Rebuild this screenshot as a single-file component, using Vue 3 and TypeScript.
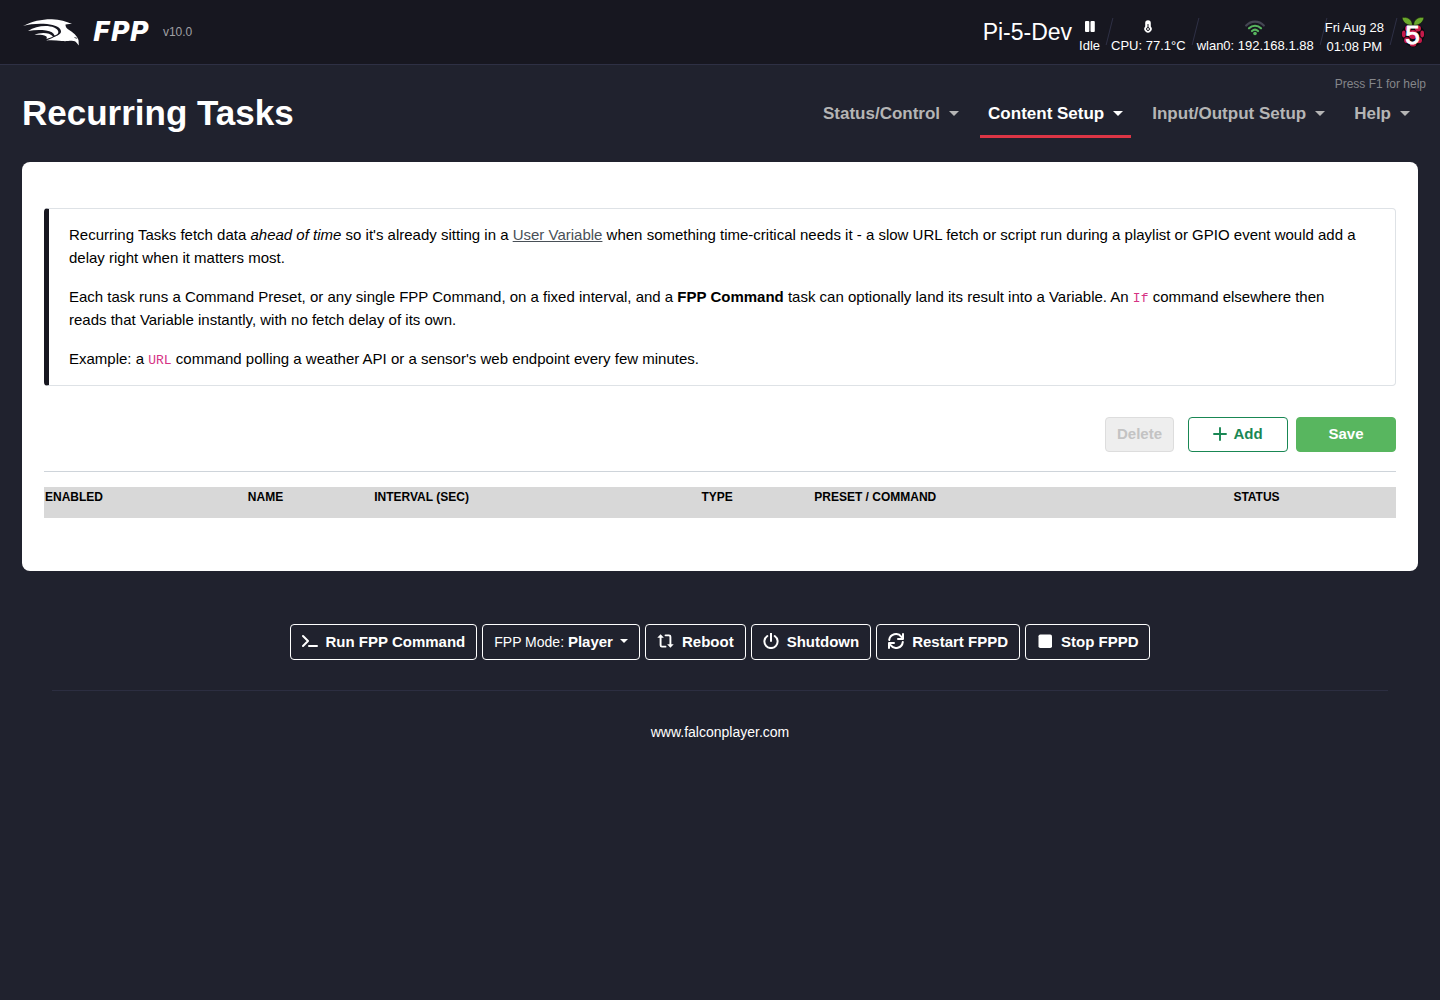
<script setup lang="ts">
interface MenuItem {
  label: string
  active?: boolean
}

interface Column {
  label: string
  width: string
}

const menu: MenuItem[] = [
  { label: 'Status/Control' },
  { label: 'Content Setup', active: true },
  { label: 'Input/Output Setup' },
  { label: 'Help' },
]

const columns: Column[] = [
  { label: 'Enabled', width: '15%' },
  { label: 'Name', width: '9.35%' },
  { label: 'Interval (sec)', width: '24.2%' },
  { label: 'Type', width: '8.35%' },
  { label: 'Preset / Command', width: '31%' },
  { label: 'Status', width: '12.1%' },
]
</script>

<template>
  <div class="page">
    <header class="topbar">
      <a class="brand" href="#">
        <svg class="falcon" viewBox="0 0 56 27" width="56" height="27" aria-hidden="true">
          <g fill="#fff">
            <path d="M0 7C9 2 20 0 29 .2c8 .2 14 2.300 20 4.900-2.500-.3-5-.2-6.500.4 0 2 .8 3.500 2.500 4.800C50.500 13.500 54 17 55.500 21l.3 5.500-2-2.500c-1-1.500-2.500-2.200-5-2.200-4 .2-6 .5-10 .2-5.500-.6-10-1-15.800-.5 3-1.200 5-1.800 7.500-3.200 4-1.800 7.500-3 7.500-5.800C38 8.500 32 5.800 24 5 15 4.300 7 5 0 7Z"/>
            <path d="M5 12C13 6.500 25 5.800 31 8.500c4 1.700 5.500 4.500 3.500 6.500-1 .9-2 1.200-3 1.500-.7-2.500-3.500-4.300-8.500-5-6-.8-12-.5-18 .5Z"/>
            <path d="M11.500 15.800c6-2.800 15-2.800 18.500 1.700-2 .9-3.500 1.600-6.500 2.500.5-1.500.5-2-.5-2.800-2.500-1.400-6.500-1.700-11.500-1.400Z"/>
          </g>
          <path stroke="#171720" stroke-width=".8" fill="none" d="M51.500 18.500l2.500.8"/>
        </svg>
        <span class="wordmark">FPP</span>
        <span class="version">v10.0</span>
      </a>
      <div class="status">
        <div class="host">Pi-5-Dev</div>
        <div class="stat">
          <svg viewBox="0 0 10 18" width="10" height="18" aria-hidden="true">
            <rect x="0" y="3" width="4.300" height="11" rx="1" fill="#fff"/>
            <rect x="5.500" y="3" width="4.300" height="11" rx="1" fill="#fff"/>
          </svg>
          <span>Idle</span>
        </div>
        <div class="stat">
          <svg viewBox="0 0 8 18" width="8" height="18" aria-hidden="true">
            <path fill="#fff" d="M1.200 5a2.800 2.800 0 0 1 5.600 0v3.500a3.700 3.700 0 1 1-5.600 0Z"/>
            <path fill="none" stroke="#171720" stroke-width="1" d="M4 6v3.500"/>
            <circle cx="4" cy="11" r="1.500" fill="none" stroke="#171720"/>
          </svg>
          <span>CPU: 77.1°C</span>
        </div>
        <div class="stat">
          <svg viewBox="0 0 20 18" width="20" height="18" aria-hidden="true" fill="none" stroke-width="2.200" stroke-linecap="round">
            <path stroke="#454653" d="M1.200 7.500C6 2.300 14 2.300 18.800 7.500"/>
            <path stroke="#58b65f" d="M4 10.300c3.500-3.400 8.500-3.400 12 0M7 13c2-1.700 4-1.700 6 0"/>
            <circle cx="10" cy="15.500" r="1.800" fill="#58b65f"/>
          </svg>
          <span>wlan0: 192.168.1.88</span>
        </div>
        <div class="stat">
          <span>Fri Aug 28</span>
          <span>01:08 PM</span>
        </div>
        <svg class="pi" viewBox="0 0 24 32" width="36" height="32" role="img" aria-label="Raspberry Pi 5">
          <path fill="#08080c" d="M12 7C6 8 1 12 .3 17c-.6 6 5 13 11.700 14.500C18.700 30 24.300 23 23.700 17 23 12 18 8 12 7Z"/>
          <path fill="#6aa82c" stroke="#10150b" stroke-width=".6" d="M11.500 9.200C6.500 9.700 2 7 1 1.600 6 .6 11 2.800 11.500 9.200ZM12.500 9.200c5 .5 9.500-2.200 10.500-7.600C18 .6 13 2.800 12.500 9.200Z"/>
          <g fill="#c51a4a">
            <circle cx="7" cy="12.500" r="3"/><circle cx="17" cy="12.500" r="3"/>
            <circle cx="12" cy="18.500" r="4.600"/><ellipse cx="2.800" cy="18" rx="1.900" ry="3.400"/>
            <ellipse cx="21.200" cy="18" rx="1.900" ry="3.400"/><circle cx="6" cy="24.300" r="3"/>
            <circle cx="18" cy="24.300" r="3"/><ellipse cx="12" cy="28.500" rx="3.200" ry="2"/>
          </g>
          <text x="11.500" y="28" text-anchor="middle" class="pi-number">5</text>
        </svg>
      </div>
    </header>

    <div class="help-hint">Press F1 for help</div>
    <div class="heading">
      <h1>Recurring Tasks</h1>
      <nav>
        <a v-for="item in menu" :key="item.label" href="#" :class="{ active: item.active }">
          {{ item.label }}<i class="caret"></i>
        </a>
      </nav>
    </div>

    <main>
      <section class="callout">
        <p>
          Recurring Tasks fetch data <em>ahead of time</em> so it's already sitting in a
          <a href="#">User Variable</a> when something time-critical needs it - a slow URL fetch or
          script run during a playlist or GPIO event would add a delay right when it matters most.
        </p>
        <p>
          Each task runs a Command Preset, or any single FPP Command, on a fixed interval, and a
          <b>FPP Command</b> task can optionally land its result into a Variable. An
          <code>If</code> command elsewhere then reads that Variable instantly, with no fetch delay
          of its own.
        </p>
        <p>
          Example: a <code>URL</code> command polling a weather API or a sensor's web endpoint every
          few minutes.
        </p>
      </section>

      <div class="actions">
        <button type="button" class="delete" disabled>Delete</button>
        <button type="button" class="add">
          <svg viewBox="0 0 14 14" width="14" height="14" aria-hidden="true">
            <path d="M7 1v12M1 7h12" fill="none" stroke="currentColor" stroke-width="1.900" stroke-linecap="round"/>
          </svg>
          Add
        </button>
        <button type="button" class="save">Save</button>
      </div>

      <hr />

      <table>
        <colgroup>
          <col v-for="c in columns" :key="c.label" :style="{ width: c.width }" />
        </colgroup>
        <thead>
          <tr>
            <th v-for="c in columns" :key="c.label" scope="col">{{ c.label }}</th>
          </tr>
        </thead>
        <tbody></tbody>
      </table>
    </main>

    <div class="controls">
      <button type="button">
        <svg viewBox="0 0 16 16" width="16" height="16" aria-hidden="true">
          <path d="M1 3l5 5-5 5M7 13h8" class="line"/>
        </svg>
        Run FPP Command
      </button>
      <button type="button" class="mode">
        <span>FPP Mode: <b>Player</b></span><i class="caret small"></i>
      </button>
      <button type="button">
        <svg viewBox="0 0 18 16" width="17" height="16" aria-hidden="true">
          <path d="M3.800 4v8.500q0 1.500 1.500 1.500H9M9 2h3.700q1.500 0 1.500 1.500V12" class="line"/>
          <path d="M3.800 .8L7.300 4.600H.3ZM14.200 15.200l3.500-3.800h-7Z" fill="currentColor"/>
        </svg>
        Reboot
      </button>
      <button type="button">
        <svg viewBox="0 0 16 16" width="16" height="16" aria-hidden="true">
          <path d="M8 .5V8M4.300 3a6.600 6.600 0 1 0 7.400 0" class="line"/>
        </svg>
        Shutdown
      </button>
      <button type="button">
        <svg viewBox="0 0 16 16" width="16" height="16" aria-hidden="true">
          <path d="M1.200 7a6.800 6.800 0 0 1 12.200-3.200L15 5.400M15 1v5h-5M14.800 9a6.800 6.800 0 0 1-12.200 3.200L1 10.600M1 15v-5h5" class="line"/>
        </svg>
        Restart FPPD
      </button>
      <button type="button">
        <svg viewBox="0 0 16 16" width="16" height="16" aria-hidden="true">
          <rect x="1.500" y="1.500" width="13.500" height="13.500" rx="1.800" fill="currentColor"/>
        </svg>
        Stop FPPD
      </button>
    </div>

    <footer>
      <a href="#">www.falconplayer.com</a>
    </footer>
  </div>
</template>

<style>
body {
  margin: 0;
  background: #20222e;
}
</style>

<style scoped>
.page {
  font-family: "Liberation Sans", Arial, sans-serif;
  font-size: 15px;
  color: #fff;
}

a {
  color: inherit;
  text-decoration: none;
}

.topbar {
  display: flex;
  justify-content: space-between;
  height: 64px;
  padding: 0 9px 0 23px;
  background: #171720;
  border-bottom: 1px solid #2e3044;
}

.brand {
  display: flex;
  align-items: center;
}

.wordmark {
  margin-left: 14px;
  font: italic bold 26px "DejaVu Sans", sans-serif;
}

.version {
  margin-left: 14px;
  font-size: 12px;
  color: #a0a0a4;
}

.status {
  display: flex;
  gap: 11px;
  padding-top: 18px;
  font-size: 13px;
  line-height: 19px;
}

.host {
  margin-right: -4px;
  font-size: 23px;
  line-height: 28px;
}

.stat {
  position: relative;
  display: flex;
  flex-direction: column;
  align-items: center;
}

.stat::after {
  content: "";
  position: absolute;
  top: 0;
  left: calc(100% + 9px);
  height: 27px;
  border-left: 1px solid #2f3145;
  transform: skewX(-14deg);
}

.pi {
  margin-top: -2px;
}

.pi-number {
  font: 26px "Liberation Sans", sans-serif;
  fill: #fff;
  stroke: #fff;
  stroke-width: 1px;
}

.help-hint {
  padding: 11px 14px 0 0;
  font-size: 12px;
  line-height: 16px;
  text-align: right;
  color: #85868a;
}

.heading {
  display: flex;
  justify-content: space-between;
  align-items: flex-start;
  margin: 0 22px;
  height: 70px;
}

h1 {
  margin: 0;
  font-size: 35px;
  line-height: 42px;
}

nav {
  display: flex;
  gap: 13px;
}

nav a {
  display: flex;
  align-items: center;
  height: 43px;
  padding: 0 8px;
  border-bottom: 3px solid transparent;
  font-size: 17px;
  font-weight: bold;
  color: #b5b5b5;
}

nav a.active {
  color: #fff;
  border-color: #dc3545;
}

.caret {
  margin-left: 9px;
  border: 5px solid transparent;
  border-top-color: currentColor;
  border-bottom: 0;
}

.caret.small {
  margin-left: 7px;
  border-width: 4px 4px 0;
}

main {
  margin: 0 22px;
  padding: 46px 22px 53px;
  border-radius: 8px;
  background: #fff;
  color: #000;
}

.callout {
  padding: 14px 34px 15px 20px;
  border: 1px solid #dee2e6;
  border-left: 5px solid #171720;
  border-radius: 4px;
}

.callout p {
  margin: 0 0 16px;
  line-height: 23px;
}

.callout p:last-child {
  margin-bottom: 0;
}

.callout a {
  color: #495057;
  text-decoration: underline;
}

code {
  font: 13px "Liberation Mono", monospace;
  color: #d63384;
}

button {
  display: flex;
  align-items: center;
  justify-content: center;
  gap: 8px;
  border: 1px solid #fff;
  border-radius: 4px;
  background: transparent;
  color: #fff;
  font: bold 15px "Liberation Sans", Arial, sans-serif;
}

.actions {
  display: flex;
  justify-content: flex-end;
  gap: 8px;
  margin-top: 31px;
}

.actions button {
  width: 100px;
  height: 35px;
  padding: 0 0 2px;
}

.actions .delete {
  width: 69px;
  margin-right: 6px;
  border-color: #ddd;
  background: #eee;
  color: #c3c3c3;
}

.actions .add {
  gap: 6px;
  border-color: #198754;
  color: #198754;
}

.actions .save {
  border-color: #58b65f;
  background: #58b65f;
}

hr {
  margin: 19px 0 15px;
  border: 0;
  border-top: 1px solid #ced4da;
}

table {
  width: 100%;
  table-layout: fixed;
  border-collapse: collapse;
}

th {
  height: 31px;
  padding: 3px 1px 0;
  box-sizing: border-box;
  background: #d8d8d8;
  font-size: 12px;
  line-height: 14px;
  text-align: left;
  text-transform: uppercase;
  vertical-align: top;
}

.controls {
  display: flex;
  flex-wrap: wrap;
  justify-content: center;
  gap: 5px;
  margin-top: 53px;
}

.controls button {
  height: 36px;
  padding: 0 11px 2px;
}

.controls .mode {
  gap: 0;
  font-size: 14px;
  font-weight: normal;
}

.mode b {
  font-size: 15px;
}

.line {
  fill: none;
  stroke: currentColor;
  stroke-width: 2;
  stroke-linecap: round;
  stroke-linejoin: round;
}

footer {
  margin: 30px 52px 0;
  padding-top: 32px;
  border-top: 1px solid #2c2e41;
  font-size: 14px;
  line-height: 18px;
  text-align: center;
}
</style>
